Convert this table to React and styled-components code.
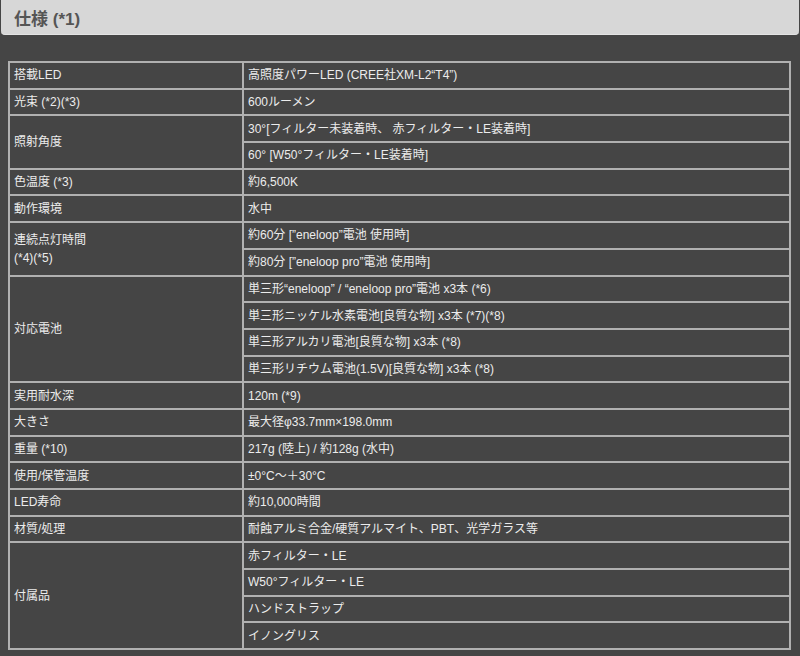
import styled, { createGlobalStyle } from "styled-components"

const GlobalStyle = createGlobalStyle`
  html, body {
    margin: 0;
    padding: 0;
    background: #454545;
  }
  body {
    font-family: "Liberation Sans", "Noto Sans CJK JP", sans-serif;
  }
`

const Page = styled.div`
  width: 800px;
  height: 656px;
  background: #454545;
  overflow: hidden;
`

const Header = styled.div`
  height: 34px;
  margin: 0 1px;
  padding: 0 13px;
  display: flex;
  align-items: center;

  background: #d7d7d7;
  border-bottom: 1px solid #e4e4e4;
  border-radius: 0 0 4px 4px;
`

const Title = styled.h2`
  margin: 0;
  font-size: 17px;
  font-weight: 700;
  color: #555555;
`

const Body = styled.div`
  padding: 26px 9px 0 8px;
`

const Table = styled.table`
  width: 100%;
  border-collapse: collapse;
  border: 2px solid #b8b8b8;
`

const Cell = styled.td`
  height: 24.7px;
  padding: 0 4px;
  border: 2px solid #b0b0b0;

  font-size: 12px;
  line-height: 18px;
  color: #ececec;
  vertical-align: middle;
  white-space: nowrap;
`

const Label = styled(Cell)`
  width: 224px;
`

const specs = [
  ["搭載LED", ["高照度パワーLED (CREE社XM-L2“T4”)"]],
  ["光束 (*2)(*3)", ["600ルーメン"]],
  ["照射角度", ["30°[フィルター未装着時、 赤フィルター・LE装着時]", "60° [W50°フィルター・LE装着時]"]],
  ["色温度 (*3)", ["約6,500K"]],
  ["動作環境", ["水中"]],
  [["連続点灯時間", "(*4)(*5)"], ["約60分 [”eneloop”電池 使用時]", "約80分 [”eneloop pro”電池 使用時]"]],
  ["対応電池", [
    "単三形“eneloop” / “eneloop pro”電池 x3本 (*6)",
    "単三形ニッケル水素電池[良質な物] x3本 (*7)(*8)",
    "単三形アルカリ電池[良質な物] x3本 (*8)",
    "単三形リチウム電池(1.5V)[良質な物] x3本 (*8)",
  ]],
  ["実用耐水深", ["120m (*9)"]],
  ["大きさ", ["最大径φ33.7mm×198.0mm"]],
  ["重量 (*10)", ["217g (陸上) / 約128g (水中)"]],
  ["使用/保管温度", ["±0°C～＋30°C"]],
  ["LED寿命", ["約10,000時間"]],
  ["材質/処理", ["耐蝕アルミ合金/硬質アルマイト、PBT、光学ガラス等"]],
  ["付属品", ["赤フィルター・LE", "W50°フィルター・LE", "ハンドストラップ", "イノングリス"]],
]

const renderLabel = (label) =>
  Array.isArray(label)
    ? label.map((line, i) => (
        <span key={i}>
          {i > 0 && <br />}
          {line}
        </span>
      ))
    : label

export default function App() {
  return (
    <Page>
      <GlobalStyle />
      <Header>
        <Title>仕様 (*1)</Title>
      </Header>
      <Body>
        <Table>
          <tbody>
            {specs.flatMap(([label, values], r) =>
              values.map((value, i) => (
                <tr key={`${r}-${i}`}>
                  {i === 0 && (
                    <Label rowSpan={values.length}>{renderLabel(label)}</Label>
                  )}
                  <Cell>{value}</Cell>
                </tr>
              ))
            )}
          </tbody>
        </Table>
      </Body>
    </Page>
  )
}
